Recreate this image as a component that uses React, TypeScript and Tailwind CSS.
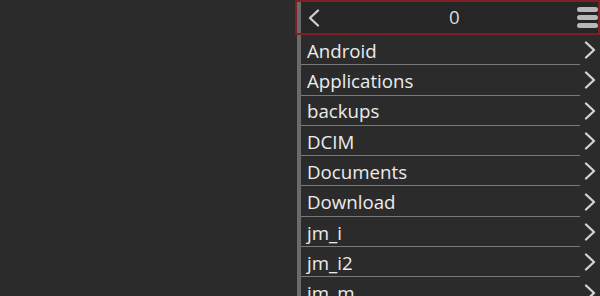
const folders = [
  "Android",
  "Applications",
  "backups",
  "DCIM",
  "Documents",
  "Download",
  "jm_i",
  "jm_i2",
  "jm_m",
];

function Chevron({ dir, className }: { dir: "left" | "right"; className?: string }) {
  return (
    <svg viewBox="0 0 12 18" className={className} fill="none" stroke="currentColor" strokeWidth={2.3} strokeLinecap="round" strokeLinejoin="round">
      {dir === "right" ? <path d="M2 1.5 L10 9 L2 16.5" /> : <path d="M10 1.5 L2 9 L10 16.5" />}
    </svg>
  );
}

export default function App() {
  return (
    <div
      className="flex h-[296px] w-[600px] overflow-hidden bg-[#2b2b2b] text-[#ececec]"
      style={{ fontFamily: '"Open Sans", "Noto Sans", sans-serif' }}
    >
      <div className="w-[295px] shrink-0" />
      <div className="flex flex-1 flex-col">
        {/* header */}
        <div className="flex h-[35px] shrink-0 border-2 border-[#7d1f25] bg-[#262626]">
          <div className="w-[4px] bg-[#6a6a6a]" />
          <div className="relative flex flex-1 items-center justify-between pl-[7px]">
            <Chevron dir="left" className="h-[18px] w-[12px] text-[#cfcfcf]" />
            <span className="absolute left-[148px] text-[18.7px] leading-none text-[#dedede]">0</span>
            <div className="flex flex-col gap-[3px] pb-[1px]">
              <div className="h-[5px] w-[21px] rounded-full bg-[#b8b8b8]" />
              <div className="h-[5px] w-[21px] rounded-full bg-[#b8b8b8]" />
              <div className="h-[5px] w-[21px] rounded-full bg-[#b8b8b8]" />
            </div>
          </div>
        </div>
        {folders.map((name) => (
          <div key={name} className="flex h-[30.3px] shrink-0 pl-[2px]">
            <div className="w-[4px] bg-[#6a6a6a]" />
            <div className="flex flex-1 items-center">
              <div className="flex h-full flex-1 items-center border-b border-[#7a7a7a] pl-[6px] pt-[3px] text-[18.7px] leading-none">
                {name}
              </div>
              <Chevron dir="right" className="mx-[4px] h-[18px] w-[12px] text-[#d4d4d4]" />
            </div>
          </div>
        ))}
      </div>
    </div>
  );
}
